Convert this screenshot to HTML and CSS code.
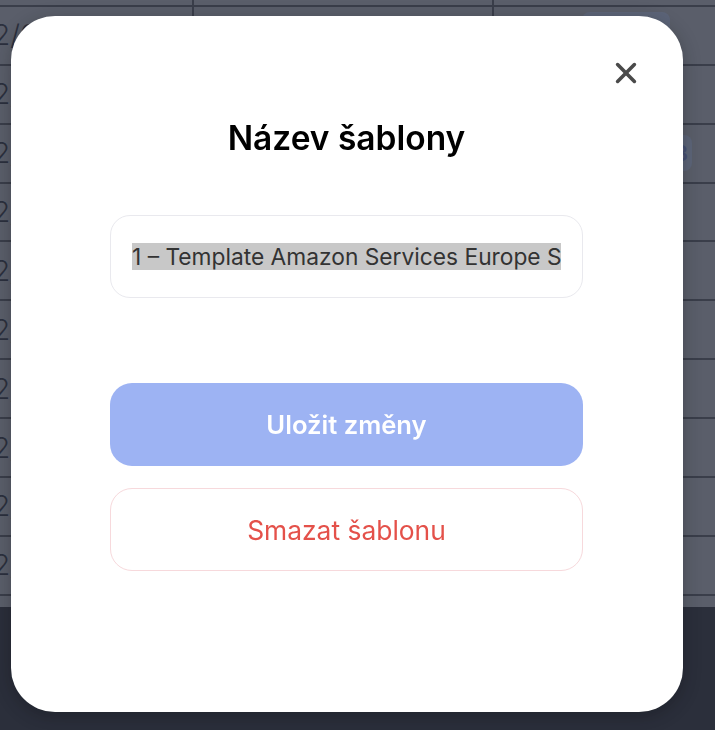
FILE: index.html
```html
<!DOCTYPE html>
<html lang="cs">
<head>
    <meta charset="UTF-8">
    <meta name="viewport" content="width=device-width, initial-scale=1.0">
    <title>Šablony</title>
    <link rel="stylesheet" href="styles.css">
</head>
<body>
    <div class="page">
        <div class="table">
            <div class="row"><div class="cell date">2/03/2024</div><div class="cell"></div><div class="cell"></div></div>
            <div class="row"><div class="cell date">2/03/2024</div><div class="cell"></div><div class="cell"><span class="tag tag-edit">Upravit</span></div></div>
            <div class="row"><div class="cell date">2/03/2024</div><div class="cell"></div><div class="cell"></div></div>
            <div class="row"><div class="cell date">2/04/2024</div><div class="cell"></div><div class="cell end"><span class="tag tag-count">18</span></div></div>
            <div class="row"><div class="cell date">2/04/2024</div><div class="cell"></div><div class="cell"></div></div>
            <div class="row"><div class="cell date">2/05/2024</div><div class="cell"></div><div class="cell"></div></div>
            <div class="row"><div class="cell date">2/05/2024</div><div class="cell"></div><div class="cell"></div></div>
            <div class="row"><div class="cell date">2/06/2024</div><div class="cell"></div><div class="cell"></div></div>
            <div class="row"><div class="cell date">2/06/2024</div><div class="cell"></div><div class="cell"></div></div>
            <div class="row"><div class="cell date">2/07/2024</div><div class="cell"></div><div class="cell"></div></div>
            <div class="row"><div class="cell date">2/07/2024</div><div class="cell"></div><div class="cell"></div></div>
        </div>
        <div class="footer"></div>
    </div>

    <div class="overlay">
        <div class="modal">
            <button class="close" aria-label="Zavřít">
                <svg width="22" height="22" viewBox="0 0 22 22">
                    <path d="M2.6 2.6 L19.4 19.4 M19.4 2.6 L2.6 19.4" stroke="#4a4a4a" stroke-width="3.6" stroke-linecap="round" fill="none"/>
                </svg>
            </button>
            <h2 class="title">Název šablony</h2>
            <div class="field">
                <div class="field-text"><span class="selected">1 – Template Amazon Services Europe SARL</span></div>
            </div>
            <button class="btn btn-primary">Uložit změny</button>
            <button class="btn btn-danger">Smazat šablonu</button>
        </div>
    </div>
</body>
</html>
```

FILE: styles.css
```css
html, body {
    margin: 0;
    padding: 0;
    height: 100%;
    overflow: hidden;
}
body {
    font-family: Inter, "Noto Sans", sans-serif;
    background-color: #55575f;
}
.page {
    height: 100%;
    display: flex;
    flex-direction: column;
}
.table {
    margin-top: -52px;
    padding-bottom: 11px;
    background: #cacdd4;
}
.row {
    display: grid;
    grid-template-columns: 192px 300px 1fr;
    height: 58.9px;
    box-sizing: border-box;
    border-bottom: 2px solid #7a7d84;
}
.cell {
    display: flex;
    align-items: center;
    overflow: hidden;
}
.cell + .cell {
    border-left: 2px solid #7a7d84;
}
.cell.end {
    justify-content: flex-end;
    padding-right: 23px;
}
.date {
    font-size: 28px;
    font-weight: 300;
    color: #575a66;
    text-indent: -7px;
    white-space: nowrap;
}
.tag {
    display: flex;
    align-items: center;
    justify-content: flex-end;
    border-radius: 8px;
    background: #cfdcf7;
    color: #98aaeb;
    font-size: 22px;
    font-weight: 600;
}
.tag-edit {
    margin-left: 88px;
    width: 88px;
    height: 46px;
}
.tag-count {
    width: 90px;
    height: 36px;
    padding-right: 4px;
    box-sizing: border-box;
}
.footer {
    flex: 1;
    background: #55575f;
}

.overlay {
    position: fixed;
    inset: 0;
    background: rgba(15, 20, 35, 0.6);
    display: flex;
    align-items: flex-start;
    padding: 16px 0 0 11px;
}
.modal {
    position: relative;
    width: 672px;
    height: 696px;
    box-sizing: border-box;
    padding: 103px 100px 0 99px;
    background: #ffffff;
    border-radius: 44px;
    box-shadow: 0 4px 18px rgba(0, 0, 0, 0.25);
    display: flex;
    flex-direction: column;
}
.close {
    position: absolute;
    top: 46px;
    right: 46px;
    width: 22px;
    height: 22px;
    padding: 0;
    border: none;
    background: none;
    cursor: pointer;
}
.close svg {
    display: block;
}
.title {
    margin: 0 0 57px;
    font-size: 33.5px;
    font-weight: 600;
    line-height: 39px;
    color: #000000;
    text-align: center;
}
.field {
    height: 83px;
    box-sizing: border-box;
    border: 1px solid #e9e9ee;
    border-radius: 20px;
    padding: 0 21px;
    display: flex;
    align-items: center;
    margin-bottom: 85px;
}
.field-text {
    overflow: hidden;
    white-space: nowrap;
    font-size: 22.76px;
    color: #333333;
}
.selected {
    background: #c8c8c8;
}
.btn {
    height: 83px;
    border-radius: 22px;
    font-family: Inter, "Noto Sans", sans-serif;
    cursor: pointer;
}
.btn-primary {
    background: #9db3f3;
    border: none;
    color: #ffffff;
    font-size: 25.6px;
    font-weight: 600;
    margin-bottom: 22px;
}
.btn-danger {
    background: #ffffff;
    border: 1px solid #f7d9dc;
    color: #e4514a;
    font-size: 26.4px;
    font-weight: 400;
}
```
